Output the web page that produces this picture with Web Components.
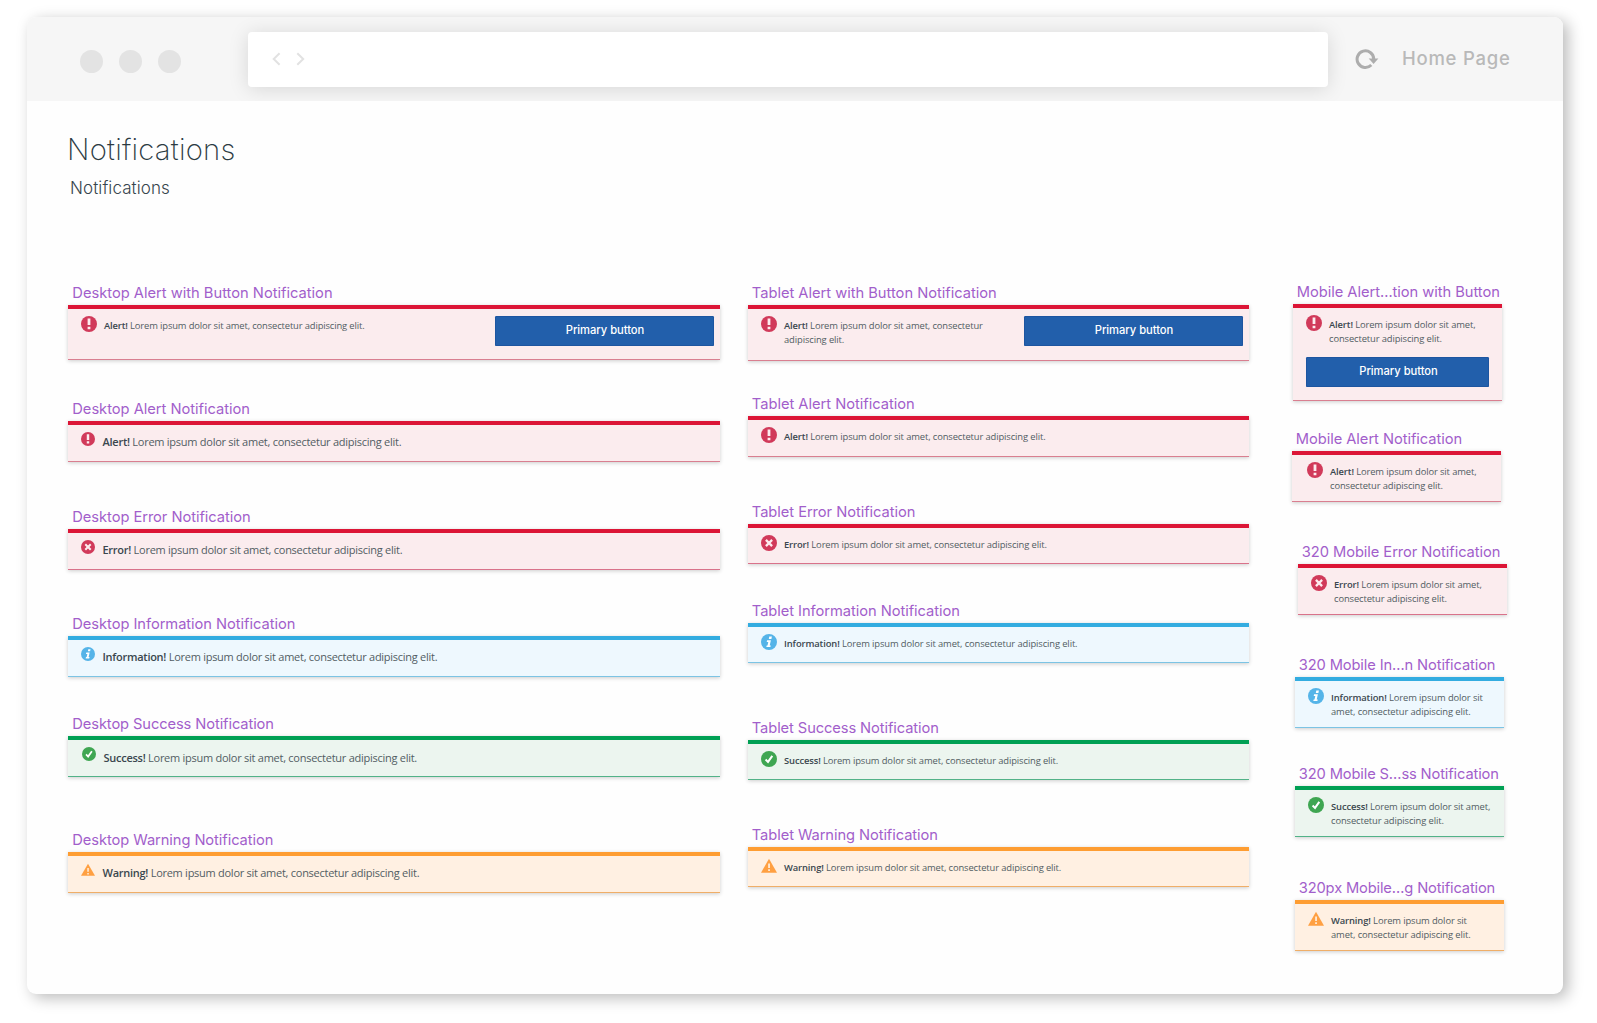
<!DOCTYPE html>
<html lang="en">
<head>
<meta charset="utf-8">
<title>Notifications</title>
<style>
  html, body { margin: 0; background: #fff; }
  body { width: 1597px; height: 1023px; overflow: hidden; font-family: "Open Sans", sans-serif; color: #36454d; }
  browser-window { margin: 16.5px 0 0 27px; }
</style>
</head>
<body>
<browser-window label="Home Page">
  <page-heading></page-heading>
  <notice-board></notice-board>
</browser-window>

<script>
/* One line of text whose tracking is tuned so it spans `width` pixels. */
class TrackedText extends HTMLElement {
  constructor() {
    super();
    this.attachShadow({ mode: 'open' }).innerHTML =
      '<style>:host{display:block;white-space:nowrap;width:max-content}::slotted(b){font-weight:600;color:#3a474e}</style><slot></slot>';
  }
  connectedCallback() {
    const target = parseFloat(this.getAttribute('width'));
    const n = this.textContent.length;
    const natural = this.getBoundingClientRect().width;
    if (target && natural) this.style.letterSpacing = ((target - natural) / n).toFixed(3) + 'px';
  }
}

class BrowserWindow extends HTMLElement {
  constructor() {
    super();
    this.attachShadow({ mode: 'open' }).innerHTML = `
    <style>
      :host{display:flex;flex-direction:column;width:1536px;height:977.5px;border-radius:9px;background:#fefefe;
        box-shadow:5px 4px 15px rgba(0,0,0,.27)}
      header{display:flex;align-items:flex-start;height:84.5px;box-sizing:border-box;background:#f6f6f6;border-radius:9px 9px 0 0;overflow:hidden;padding:15.5px 0 0 53px;flex:none}
      .dots{display:flex;gap:16px;padding-top:18px;width:168px}
      .dots i{width:23px;height:23px;border-radius:50%;background:#e3e3e3}
      .bar{width:1080px;height:55px;border-radius:4px;background:#fff;box-shadow:0 2px 20px rgba(0,0,0,.13);box-sizing:border-box;padding:20px 0 0 24px;display:flex}
      .reload{margin:16px 0 0 27px}
      .label{margin:12px 0 0 23px;font:500 18.5px/28px Inter,sans-serif;color:#b9b9b9}
      main{display:block;padding:34px 0 0 41px}
    </style>
    <header>
      <div class="dots"><i></i><i></i><i></i></div>
      <div class="bar"><svg width="34" height="14" viewBox="0 0 34 14" fill="none" stroke="#e2e2e2" stroke-width="2"><path d="M7.6 1.2 1.7 7l5.900 5.800M25.300 1.200 31.200 7l-5.900 5.800"/></svg></div>
      <svg class="reload" width="24" height="22" viewBox="0 0 24 22"><path d="M16.300 17A8.300 8.300 0 1 1 18.700 11" fill="none" stroke="#adadad" stroke-width="3"/><path d="M13.700 10.600h9.700l-4.800 5.300z" fill="#adadad"/></svg>
      <div class="label"></div>
    </header>
    <main><slot></slot></main>`;
    this.shadowRoot.querySelector('.label').innerHTML = `<tracked-text width="108.500">${this.getAttribute('label')}</tracked-text>`;
  }
}

class PageHeading extends HTMLElement {
  constructor() {
    super();
    this.attachShadow({ mode: 'open' }).innerHTML = `
    <style>
      :host{display:flow-root;height:146px}
      h1{margin:-1px 0 0 -1px;font:200 29.300px/32px Inter,sans-serif;color:#2c3b43}
      h2{margin:12px 0 0 2px;font:300 17px/20px Inter,sans-serif;color:#37454d}
    </style>
    <h1><tracked-text width="168.500">Notifications</tracked-text></h1>
    <h2><tracked-text width="100">Notifications</tracked-text></h2>`;
  }
}

const GLYPHS = {
  alert: '<circle cx="8" cy="8" r="8"/><path fill="#fdecef" d="M6.600 2.600h2.800v6.500H6.600zM6.600 10.700h2.800v2.500H6.600z"/>',
  error: '<circle cx="8" cy="8" r="8"/><path stroke="#fdecef" stroke-width="2.300" d="m4.900 4.900 6.200 6.200m0-6.200-6.200 6.200"/>',
  info: '<circle cx="8" cy="8" r="8"/><path fill="#fff" d="M8.300 2.600h2.600L10.400 4.900H7.800zM6.100 6.200h3.800l-1.200 5.200h1.100l-.4 1.700H5.300l.4-1.700h.8l.8-3.500H5.700z"/>',
  success: '<circle cx="8" cy="8" r="8"/><path fill="none" stroke="#fff" stroke-width="2" d="m4.600 8.500 2.400 2.400 4.300-6.100"/>',
  warning: '<path d="M8 .8 16 14.700H0z"/><path fill="#fff0e1" d="M7.200 5.600h1.700v4.400H7.200zM7.200 11.300h1.700V13H7.200z"/>'
};

class NoticeIcon extends HTMLElement {
  constructor() {
    super();
    this.attachShadow({ mode: 'open' });
  }
  connectedCallback() {
    this.shadowRoot.innerHTML = `<style>:host{display:block;flex:none}svg{display:block;width:100%;height:100%}</style>
      <svg viewBox="0 0 16 16" fill="currentColor">${GLYPHS[this.getAttribute('kind')]}</svg>`;
  }
}

class PrimaryButton extends HTMLElement {
  constructor() {
    super();
    this.attachShadow({ mode: 'open' }).innerHTML = `<style>
      :host{display:flex;justify-content:center;box-sizing:border-box;height:30px;padding:4px 0 0 2px;border-radius:1.500px;background:#225fab;
        box-shadow:inset 0 0 0 1px #1d55a0;color:#fff;font:500 11.200px/20px Inter,sans-serif}
      </style><tracked-text width="78.500">Primary button</tracked-text>`;
  }
}

const TONES = {
  alert: ['#dc1536', '#fbecee', '#d97f90', '#d13a5a'],
  error: ['#dc1536', '#fbecee', '#d9728a', '#d13a5a'],
  info: ['#33ace0', '#eef8fe', '#7cc4e4', '#55b4e8'],
  success: ['#00a054', '#ecf5ef', '#52b288', '#3fa652'],
  warning: ['#fe9d32', '#fff0e2', '#efae68', '#ffa042']
};

/* Caption plus its notification strip. */
class NoticeCard extends HTMLElement {
  constructor() {
    super();
    this.attachShadow({ mode: 'open' });
  }
  connectedCallback() {
    const d = this.spec;
    const [bar, bg, foot, ink] = TONES[d.kind];
    const big = d.size === 'large';
    const icon = big ? 14 : 16;
    const stacked = d.stack;
    this.shadowRoot.innerHTML = `
    <style>
      :host{display:block}
      .caption{height:23px;padding:1px 0 0 4.300px;font:400 14.700px/20px Inter,sans-serif;color:#a25ecb;box-sizing:border-box}
      .box{height:${d.h}px;box-sizing:border-box;background:${bg};border-top:4px solid ${bar};border-bottom:1.500px solid ${foot};
        box-shadow:0 1px 4px rgba(0,0,0,.2);display:flex;flex-direction:${stacked ? 'column' : 'row'};justify-content:space-between;padding-left:${d.pad}px}
      .msg{display:flex;gap:${big ? 7.500 : 7}px;padding-top:7.300px}
      notice-icon{width:${icon}px;height:${icon}px;color:${ink}}
      .lines{padding-top:${(big ? 2.700 : 3.200) + (d.dy || 0)}px;font:400 ${big ? 11 : 9.400}px/14px "Open Sans",sans-serif;color:#525d63}
      primary-button{width:${stacked ? 183 : 219}px;margin:${stacked ? '0 0 13.500px' : '7px 6.500px 0 0'}}
    </style>
    <div class="caption"><tracked-text width="${d.tw + 1.300}">${d.title}</tracked-text></div>
    <div class="box">
      <div class="msg"><notice-icon kind="${d.kind}"></notice-icon>
        <div class="lines">${d.lines.map(l => `<tracked-text width="${l[1] + 0.500}">${l[0]}</tracked-text>`).join('')}</div></div>
      ${d.button ? '<primary-button></primary-button>' : ''}
    </div>`;
  }
}

const L = 'Lorem ipsum dolor sit amet, consectetur adipiscing elit.';
const L1 = 'Lorem ipsum dolor sit amet,';
const L2 = 'consectetur adipiscing elit.';
const COLUMNS = [
  { w: 652, gap: 27.500, pad: 13, items: [
    { title: 'Desktop Alert with Button Notification', tw: 259, kind: 'alert', h: 55, mt: 1, button: 1, lines: [['<b>Alert!</b> ' + L, 260]] },
    { title: 'Desktop Alert Notification', tw: 176.3, kind: 'alert', h: 41, mt: 38, size: 'large', lines: [['<b>Alert!</b> ' + L, 298.300]] },
    { title: 'Desktop Error Notification', tw: 177, kind: 'error', h: 41, mt: 44, size: 'large', lines: [['<b>Error!</b> ' + L, 299.300]] },
    { title: 'Desktop Information Notification', tw: 221.700, kind: 'info', h: 41, mt: 43, size: 'large', lines: [['<b>Information!</b> ' + L, 334.300]] },
    { title: 'Desktop Success Notification', tw: 200.300, kind: 'success', h: 41, mt: 36, size: 'large', pad: 14, dy: 1, lines: [['<b>Success!</b> ' + L, 313]] },
    { title: 'Desktop Warning Notification', tw: 199.700, kind: 'warning', h: 41, mt: 52, size: 'large', lines: [['<b>Warning!</b> ' + L, 316.300]] }
  ]},
  { w: 501.500, gap: 42.500, pad: 13.500, items: [
    { title: 'Tablet Alert with Button Notification', tw: 243.700, kind: 'alert', h: 56, mt: 1, button: 1, lines: [['<b>Alert!</b> Lorem ipsum dolor sit amet, consectetur', 198.300], ['adipiscing elit.', 59.700]] },
    { title: 'Tablet Alert Notification', tw: 161.700, kind: 'alert', h: 41, mt: 32, lines: [['<b>Alert!</b> ' + L, 261]] },
    { title: 'Tablet Error Notification', tw: 162.300, kind: 'error', h: 40, mt: 44, lines: [['<b>Error!</b> ' + L, 262.300]] },
    { title: 'Tablet Information Notification', tw: 206.700, kind: 'info', h: 40, mt: 36, lines: [['<b>Information!</b> ' + L, 293]] },
    { title: 'Tablet Success Notification', tw: 185.700, kind: 'success', h: 40, mt: 54, lines: [['<b>Success!</b> ' + L, 273.700]] },
    { title: 'Tablet Warning Notification', tw: 184.700, kind: 'warning', h: 40, mt: 44, lines: [['<b>Warning!</b> ' + L, 276.700]] }
  ]},
  { w: 209, gap: 0, pad: 13.500, items: [
    { title: 'Mobile Alert…tion with Button', tw: 201.700, kind: 'alert', h: 97, mt: 0, ml: 1, button: 1, stack: 1, lines: [['<b>Alert!</b> ' + L1, 146], [L2, 112.300]] },
    { title: 'Mobile Alert Notification', tw: 165, kind: 'alert', h: 51, mt: 27, ml: 0, pad: 15.500, lines: [['<b>Alert!</b> ' + L1, 146], [L2, 112.300]] },
    { title: '320 Mobile Error Notification', tw: 197.300, kind: 'error', h: 51, mt: 39, ml: 6, lines: [['<b>Error!</b> ' + L1, 147.300], [L2, 112.300]] },
    { title: '320 Mobile In…n Notification', tw: 195.300, kind: 'info', h: 51, mt: 39, ml: 3, lines: [['<b>Information!</b> Lorem ipsum dolor sit', 151.300], ['amet, consectetur adipiscing elit.', 139]] },
    { title: '320 Mobile S…ss Notification', tw: 198.700, kind: 'success', h: 51, mt: 35, ml: 3, lines: [['<b>Success!</b> ' + L1, 158.700], [L2, 112.300]] },
    { title: '320px Mobile…g Notification', tw: 195, kind: 'warning', h: 51, mt: 40, ml: 3, lines: [['<b>Warning!</b> Lorem ipsum dolor sit', 135.300], ['amet, consectetur adipiscing elit.', 139]] }
  ]}
];

class NoticeBoard extends HTMLElement {
  constructor() {
    super();
    this.attachShadow({ mode: 'open' }).innerHTML = `<style>
      :host{display:flex;align-items:flex-start}
      .col{display:flex;flex-direction:column;flex:none}
    </style>`;
  }
  connectedCallback() {
    for (const c of COLUMNS) {
      const col = document.createElement('div');
      col.className = 'col';
      col.style.cssText = `width:${c.w}px;margin-right:${c.gap}px`;
      this.shadowRoot.append(col);
      for (const spec of c.items) {
        const card = document.createElement('notice-card');
        card.spec = { ...spec, pad: spec.pad || c.pad };
        card.style.cssText = `width:${c.w}px;margin:${spec.mt}px 0 0 ${spec.ml || 0}px`;
        col.append(card);
      }
    }
  }
}

customElements.define('browser-window', BrowserWindow);
customElements.define('page-heading', PageHeading);
customElements.define('tracked-text', TrackedText);
customElements.define('notice-icon', NoticeIcon);
customElements.define('primary-button', PrimaryButton);
customElements.define('notice-card', NoticeCard);
customElements.define('notice-board', NoticeBoard);
</script>
</body>
</html>
